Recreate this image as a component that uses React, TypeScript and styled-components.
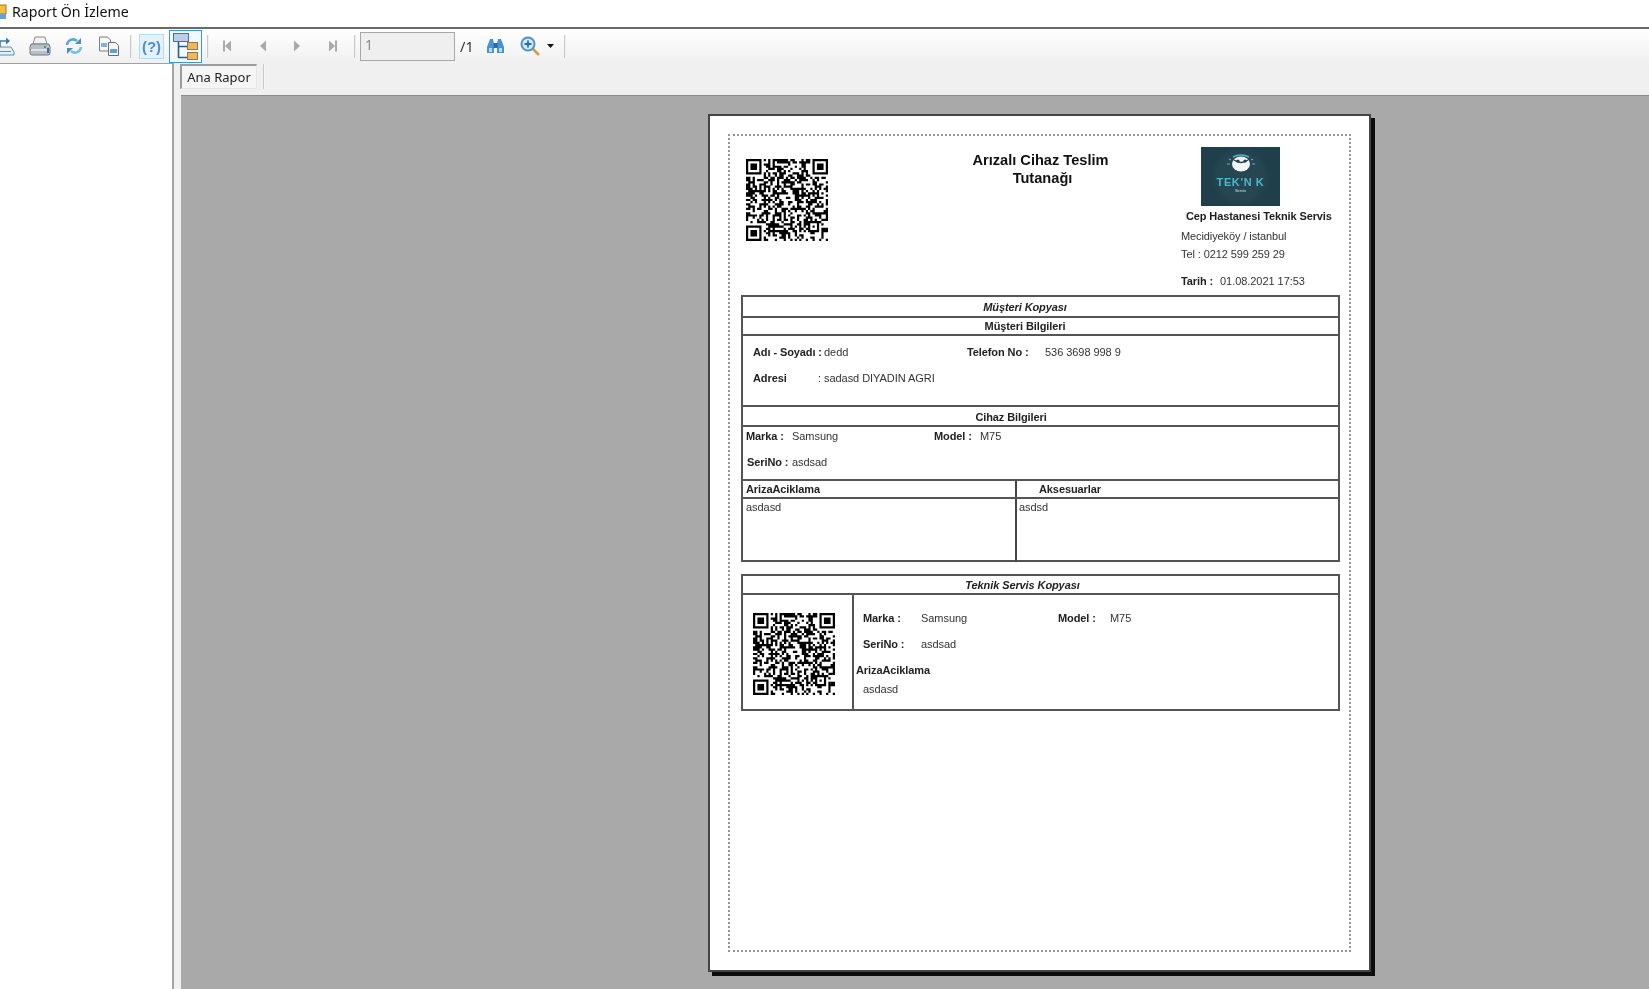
import React from "react";
import styled, { createGlobalStyle } from "styled-components";

const Global = createGlobalStyle`
  html, body { margin: 0; padding: 0; height: 100%; background: #a9a9a9; overflow: hidden; }
  #root { height: 100%; }
  * { box-sizing: border-box; }
`;

const Window = styled.div`
  width: 1649px; height: 100vh; min-height: 989px; display: flex; flex-direction: column;
  background: #f0f0f0; overflow: hidden; font-family: "Liberation Sans", Arial, sans-serif;
  filter: blur(0.35px);
`;
const TitleBar = styled.div`
  height: 29px; flex: none; background: #fff; border-bottom: 2px solid #6a6a6a;
  display: flex; align-items: center; padding-bottom: 4px; gap: 5px;
`;
const TitleText = styled.span`
  font-family: "Noto Sans", sans-serif; font-size: 14.2px; color: #111; white-space: nowrap;
`;
const Toolbar = styled.div`
  height: 34px; flex: none; display: flex; align-items: center;
  background: linear-gradient(#fff 0%, #f9f9f9 40%, #f0f0f0 100%);
`;
const ToolButton = styled.div<{ $w: number; $ml?: number }>`
  width: ${(p) => p.$w}px; margin-left: ${(p) => p.$ml ?? 0}px; height: 100%; flex: none;
  display: flex; align-items: center; justify-content: center;
`;
const ToolSep = styled.div<{ $ml: number }>`
  width: 2px; height: 23px; flex: none; margin-left: ${(p) => p.$ml}px; margin-top: 1px;
  background: #c9c9c9; border-right: 1px solid #efefef;
`;
const HelpButton = styled.div`
  width: 25px; height: 25px; flex: none; margin-left: 7px; margin-top: 1px;
  background: #e6f2fb; border: 1px solid #b5dcf7; color: #4a8fd0;
  font-size: 15px; font-weight: 700; display: flex; align-items: center; justify-content: center;
`;
const ToggledButton = styled.div`
  width: 33px; height: 33px; flex: none; margin-left: 5px;
  background: #f3f8fc; border: 1px solid #3d94e0;
  display: flex; align-items: center; justify-content: center;
`;
const PageBox = styled.div`
  width: 95px; height: 29px; flex: none; margin-left: 4px;
  background: #efefef; border: 1px solid #a8a8a8; color: #8a8a8a;
  font-family: "Noto Sans", sans-serif; font-size: 14px; padding-left: 4px; line-height: 23px;
`;
const PageTotal = styled.span`
  margin-left: 5px; width: 20px; flex: none; color: #333;
  font-family: "Noto Sans", sans-serif; font-size: 14.5px;
`;
const Body = styled.div`flex: 1; display: flex; min-height: 0;`;
const Sidebar = styled.div`
  width: 174px; flex: none; background: #fff;
  border-top: 1px solid #a0a0a0; border-right: 2px solid #a4a4a4;
`;
const Content = styled.div`flex: 1; display: flex; flex-direction: column; min-width: 0;`;
const TabStrip = styled.div`
  height: 32px; flex: none; display: flex; align-items: flex-start; padding: 1px 0 0 6px;
`;
const Tab = styled.div`
  width: 77px; height: 25px; flex: none; background: #f5f5f5;
  border-top: 2px solid #9c9c9c; border-left: 2px solid #9c9c9c;
  border-right: 1px solid #e6e6e6; border-bottom: 1px solid #e6e6e6;
  font-family: "Noto Sans", sans-serif; font-size: 13px; color: #222;
  display: flex; align-items: center; justify-content: center;
`;
const TabSep = styled.div`
  width: 2px; height: 25px; margin-left: 6px; background: #c9c9c9; border-right: 1px solid #f5f5f5;
`;
const Viewer = styled.div`
  flex: 1; margin-left: 7px; background: #a9a9a9; border-top: 1px solid #8c8c8c;
  padding: 18px 0 0 527px; overflow: hidden;
`;
const Paper = styled.div`
  width: 663px; height: 858px; background: #fff; border: 2px solid #444;
  box-shadow: 4px 4px 0 #0c0c0c; padding: 18px;
`;
const Sheet = styled.div`
  width: 623px; height: 818px; border: 2px dotted #949494;
  padding: 0 9px 0 11px; color: #1c1c1c; font-size: 11px; line-height: 14px;
`;
const Header = styled.div`height: 159px; display: flex;`;
const QrSlot = styled.div`
  flex: none; margin: 23px 0 0 5px; width: 82px; height: 82px;
`;
const TitleBlock = styled.div`
  width: 353px; flex: none; padding: 15px 0 0 72px; text-align: center;
  font-weight: 700; font-size: 14.6px; line-height: 18px; color: #111;
`;
const TitleSecond = styled.div`padding-left: 4px;`;
const Company = styled.div`flex: none; width: 158px; padding-top: 11px;`;
const Logo = styled.div`
  width: 79px; height: 59px; margin-left: 20px;
  background: radial-gradient(circle at 50% 50%, #264751 0 45%, #1f3f4a 60%);
  display: flex; flex-direction: column; align-items: center; justify-content: flex-start;
  padding-top: 5px;
`;
const LogoText = styled.div`
  font-size: 11px; font-weight: 700; line-height: 12px; letter-spacing: .6px; color: #4fb4cc;
  white-space: pre;
`;
const LogoSub = styled.div`font-size: 4px; line-height: 5px; color: #cfe0e4;`;
const CompanyName = styled.div`
  margin: 3px 0 0 5px; font-weight: 700; white-space: nowrap; letter-spacing: -.12px;
`;
const CompanyLine = styled.div<{ $mt: number }>`
  margin-top: ${(p) => p.$mt}px; white-space: nowrap; color: #333; letter-spacing: -.1px;
`;
const DateRow = styled.div`
  margin-top: 13px; display: grid; grid-template-columns: 39px auto; white-space: nowrap;
`;
const Table = styled.div<{ $mt?: number }>`
  width: 599px; border: 2px solid #555; margin-top: ${(p) => p.$mt ?? 0}px;
`;
const Row = styled.div<{ $h: number; $last?: boolean }>`
  height: ${(p) => p.$h}px; ${(p) => (p.$last ? "" : "border-bottom: 2px solid #555;")}
`;
const Heading = styled(Row)<{ $shift: number; $italic?: boolean; $drop?: number }>`
  display: flex; align-items: center; justify-content: center;
  padding: ${(p) => p.$drop ?? 0}px ${(p) => p.$shift}px 0 0; font-weight: 700;
  font-style: ${(p) => (p.$italic ? "italic" : "normal")}; letter-spacing: -.1px; color: #222;
`;
const Section = styled(Row)<{ $pl: number; $pt: number }>`
  padding: ${(p) => p.$pt}px 0 0 ${(p) => p.$pl}px;
`;
const Fields = styled.div<{ $cols: string; $mt?: number; $ml?: number }>`
  display: grid; grid-template-columns: ${(p) => p.$cols};
  margin-top: ${(p) => p.$mt ?? 0}px; margin-left: ${(p) => p.$ml ?? 0}px; white-space: nowrap;
`;
const Label = styled.span`font-weight: 700; color: #222; letter-spacing: -.1px;`;
const Value = styled.span`color: #333; letter-spacing: -.05px;`;
const SplitRow = styled(Row)`display: grid; grid-template-columns: 272px 1fr;`;
const LeftCell = styled.div`padding: 1px 0 0 3px;`;
const RightCell = styled.div<{ $pl: number; $over?: boolean }>`
  border-left: 2px solid #444; padding: 1px 0 0 ${(p) => p.$pl}px;
  ${(p) => (p.$over ? "height: 63px;" : "")}
`;
const ServiceBody = styled.div`height: 114px; display: grid; grid-template-columns: 111px 1fr;`;
const ServiceQr = styled.div`border-right: 2px solid #555; padding: 18px 0 0 10px;`;
const ServiceInfo = styled.div`padding: 16px 0 0 9px;`;

function makeQr(seed: number) {
  const n = 37;
  const grid: boolean[][] = [];
  let s = seed;
  const rnd = () => {
    s = (s * 1664525 + 1013904223) % 4294967296;
    return ((s >>> 16) & 255) / 255;
  };
  for (let y = 0; y < n; y++) {
    grid.push([]);
    for (let x = 0; x < n; x++) grid[y].push(rnd() > 0.5);
  }
  const finder = (ox: number, oy: number) => {
    for (let y = -1; y < 8; y++)
      for (let x = -1; x < 8; x++) {
        const px = ox + x, py = oy + y;
        if (px < 0 || py < 0 || px >= n || py >= n) continue;
        const ring = x >= 0 && x <= 6 && y >= 0 && y <= 6 && (x === 0 || x === 6 || y === 0 || y === 6);
        const core = x >= 2 && x <= 4 && y >= 2 && y <= 4;
        grid[py][px] = ring || core;
      }
  };
  finder(0, 0); finder(n - 7, 0); finder(0, n - 7);
  for (let y = -2; y <= 2; y++)
    for (let x = -2; x <= 2; x++)
      grid[30 + y][30 + x] = Math.max(Math.abs(x), Math.abs(y)) !== 1;
  let d = "";
  grid.forEach((r, y) => r.forEach((v, x) => { if (v) d += `M${x} ${y}h1v1h-1z`; }));
  return d;
}
const QR_PATH = makeQr(20210801);
const Qr = () => (
  <svg width="82" height="82" viewBox="0 0 37 37" style={{ display: "block" }}>
    <path d={QR_PATH} fill="#000" />
  </svg>
);

const NavIcon = ({ dir, bar }: { dir: "l" | "r"; bar?: boolean }) => (
  <svg width="9" height="12" viewBox="0 0 9 12">
    {dir === "l" ? <path d="M8 0.5v11L2 6z" fill="#aaa" /> : <path d="M1 0.5v11L7 6z" fill="#aaa" />}
    {bar && <rect x={dir === "l" ? 0 : 7} y="0.5" width="2" height="11" fill="#aaa" />}
  </svg>
);
const ExportIcon = () => (
  <svg width="34" height="20" viewBox="0 0 34 20">
    <path d="M17 11V5h7" fill="none" stroke="#3f78ad" strokeWidth="1.6" />
    <path d="M23 1.5l4 3.5-4 3.5z" fill="#3f78ad" />
    <path d="M12 11h16l3 5v3H10v-3z" fill="#e6eff7" stroke="#5f90bd" />
    <path d="M13 15.5h15" stroke="#5f90bd" />
  </svg>
);
const PrintIcon = () => (
  <svg width="22" height="20" viewBox="0 0 22 20">
    <path d="M6 1h10l2 7H4z" fill="#f3f3f3" stroke="#8c8c8c" />
    <path d="M2 8h18l1 3v6a2 2 0 0 1-2 2H3a2 2 0 0 1-2-2v-6z" fill="#b9bfc6" stroke="#727b86" />
    <path d="M2 13h18v2H2z" fill="#dfe3e8" />
    <rect x="15" y="10" width="2" height="2" fill="#3ba655" />
    <rect x="18" y="12" width="2" height="5" fill="#3b6ea8" />
  </svg>
);
const RefreshIcon = () => (
  <svg width="18" height="18" viewBox="0 0 18 18" fill="none">
    <path d="M2 8a6 6 0 0 1 10-4" stroke="#59a9d6" strokeWidth="2.6" />
    <path d="M16 1v6h-6z" fill="#4a8fc0" />
    <path d="M16 10a6 6 0 0 1-10 4" stroke="#7cc0e0" strokeWidth="2.6" />
    <path d="M2 17v-6h6z" fill="#4a8fc0" />
  </svg>
);
const CopyIcon = () => (
  <svg width="22" height="21" viewBox="0 0 22 21">
    <path d="M1.5 1h8l3 3v11h-11z" fill="#f7f7f7" stroke="#7c7c7c" />
    <path d="M3 7h6v4H3z" fill="#7fb2dc" />
    <path d="M10.5 6.5h7l3 3v10h-10z" fill="#f7f7f7" stroke="#6c6c6c" />
    <path d="M12 13h7v4h-7z" fill="#5f9fd4" />
  </svg>
);
const TreeIcon = () => (
  <svg width="25" height="27" viewBox="0 0 25 27">
    <rect x="0.5" y="0.5" width="15" height="8" fill="#b9cfe8" stroke="#4c6f9c" />
    <path d="M5.5 9v16M5.5 13.5h9M5.5 24.5h9" fill="none" stroke="#2f5c8f" strokeWidth="1.6" />
    <rect x="14.5" y="9.5" width="10" height="7" fill="#f2b654" stroke="#8a7a5a" />
    <rect x="14.5" y="19.5" width="10" height="7" fill="#f2b654" stroke="#8a7a5a" />
  </svg>
);
const BinocularsIcon = () => (
  <svg width="19" height="16" viewBox="0 0 19 16">
    <path d="M4 1h3l1 5v9H1V9z" fill="#4a92d0" />
    <path d="M12 1h3l3 8v6h-7V6z" fill="#4a92d0" />
    <rect x="7.5" y="5" width="4" height="5" fill="#2a6aa5" />
    <path d="M3 10h3v4H3zM13 10h3v4h-3z" fill="#b8dcf3" />
  </svg>
);
const ZoomIcon = () => (
  <svg width="21" height="20" viewBox="0 0 21 20">
    <path d="M12 12l7 7" stroke="#d99a4a" strokeWidth="2.6" />
    <circle cx="8" cy="8" r="6.5" fill="#d4e9f8" stroke="#4a92cf" strokeWidth="2" />
    <path d="M4.5 8h7M8 4.5v7" stroke="#2a6aa5" strokeWidth="1.8" />
  </svg>
);
const ArrowIcon = () => (
  <svg width="7" height="4" viewBox="0 0 7 4"><path d="M0 0h7L3.5 4z" fill="#111" /></svg>
);
const WindowIcon = () => (
  <svg width="7" height="16" viewBox="0 0 7 16">
    <rect x="-4" y="1" width="10" height="9" fill="#f0c040" stroke="#a07820" />
    <rect x="-4" y="10" width="10" height="5" fill="#6a9fd4" />
  </svg>
);
const LogoMark = () => (
  <svg width="34" height="24" viewBox="0 0 34 24">
    <path d="M9 5q8-4 16 0" fill="none" stroke="#4fb4cc" strokeWidth="1.4" />
    <ellipse cx="17" cy="12" rx="9" ry="7.5" fill="#f1f5f5" />
    <path d="M10 8q7 5 14 0" fill="none" stroke="#1f3f4a" strokeWidth="1.4" />
    <circle cx="14" cy="9" r="1.6" fill="#1f3f4a" /><circle cx="21" cy="9" r="1.6" fill="#1f3f4a" />
    <path d="M3 12h3M28 12h3M5 7l2 1M29 7l-2 1" stroke="#4fb4cc" strokeWidth="1.2" />
  </svg>
);

export default function App() {
  return (
    <Window>
      <Global />
      <TitleBar>
        <WindowIcon />
        <TitleText>Raport Ön İzleme</TitleText>
      </TitleBar>
      <Toolbar>
        <ToolButton $w={34} $ml={-17}><ExportIcon /></ToolButton>
        <ToolButton $w={34} $ml={6}><PrintIcon /></ToolButton>
        <ToolButton $w={34}><RefreshIcon /></ToolButton>
        <ToolButton $w={34} $ml={1}><CopyIcon /></ToolButton>
        <ToolSep $ml={4} />
        <HelpButton>(?)</HelpButton>
        <ToggledButton><TreeIcon /></ToggledButton>
        <ToolSep $ml={5} />
        <ToolButton $w={35} $ml={1}><NavIcon dir="l" bar /></ToolButton>
        <ToolButton $w={35}><NavIcon dir="l" /></ToolButton>
        <ToolButton $w={35}><NavIcon dir="r" /></ToolButton>
        <ToolButton $w={35}><NavIcon dir="r" bar /></ToolButton>
        <ToolSep $ml={4} />
        <PageBox>1</PageBox>
        <PageTotal>/1</PageTotal>
        <ToolButton $w={19} $ml={6}><BinocularsIcon /></ToolButton>
        <ToolButton $w={21} $ml={15}><ZoomIcon /></ToolButton>
        <ToolButton $w={7} $ml={6}><ArrowIcon /></ToolButton>
        <ToolSep $ml={10} />
      </Toolbar>
      <Body>
        <Sidebar />
        <Content>
          <TabStrip>
            <Tab>Ana Rapor</Tab>
            <TabSep />
          </TabStrip>
          <Viewer>
            <Paper>
              <Sheet>
                <Header>
                  <QrSlot><Qr /></QrSlot>
                  <TitleBlock>Arızalı Cihaz Teslim<TitleSecond>Tutanağı</TitleSecond></TitleBlock>
                  <Company>
                    <Logo>
                      <LogoMark />
                      <LogoText>{"TEK'N K"}</LogoText>
                      <LogoSub>Servis</LogoSub>
                    </Logo>
                    <CompanyName>Cep Hastanesi Teknik Servis</CompanyName>
                    <CompanyLine $mt={6}>Mecidiyeköy / istanbul</CompanyLine>
                    <CompanyLine $mt={4}>Tel : 0212 599 259 29</CompanyLine>
                    <DateRow><Label>Tarih :</Label><Value>01.08.2021 17:53</Value></DateRow>
                  </Company>
                </Header>
                <Table>
                  <Heading $h={21} $shift={31} $italic>Müşteri Kopyası</Heading>
                  <Heading $h={18} $shift={31}>Müşteri Bilgileri</Heading>
                  <Section $h={71} $pl={10} $pt={9}>
                    <Fields $cols="71px 143px 78px 1fr">
                      <Label>Adı - Soyadı :</Label><Value>dedd</Value>
                      <Label>Telefon No :</Label><Value>536 3698 998 9</Value>
                    </Fields>
                    <Fields $cols="65px 1fr" $mt={12}>
                      <Label>Adresi</Label><Value>: sadasd DIYADIN AGRI</Value>
                    </Fields>
                  </Section>
                  <Heading $h={20} $shift={59} $drop={2}>Cihaz Bilgileri</Heading>
                  <Section $h={54} $pl={3} $pt={2}>
                    <Fields $cols="46px 142px 46px 1fr">
                      <Label>Marka :</Label><Value>Samsung</Value>
                      <Label>Model :</Label><Value>M75</Value>
                    </Fields>
                    <Fields $cols="45px 1fr" $mt={12} $ml={1}>
                      <Label>SeriNo :</Label><Value>asdsad</Value>
                    </Fields>
                  </Section>
                  <SplitRow $h={18}>
                    <LeftCell><Label>ArizaAciklama</Label></LeftCell>
                    <RightCell $pl={22}><Label>Aksesuarlar</Label></RightCell>
                  </SplitRow>
                  <SplitRow $h={61} $last>
                    <LeftCell><Value>asdasd</Value></LeftCell>
                    <RightCell $pl={2} $over><Value>asdsd</Value></RightCell>
                  </SplitRow>
                </Table>
                <Table $mt={12}>
                  <Heading $h={19} $shift={36} $italic>Teknik Servis Kopyası</Heading>
                  <ServiceBody>
                    <ServiceQr><Qr /></ServiceQr>
                    <ServiceInfo>
                      <Fields $cols="58px 137px 52px 1fr">
                        <Label>Marka :</Label><Value>Samsung</Value>
                        <Label>Model :</Label><Value>M75</Value>
                      </Fields>
                      <Fields $cols="58px 1fr" $mt={12}>
                        <Label>SeriNo :</Label><Value>asdsad</Value>
                      </Fields>
                      <Fields $cols="1fr" $mt={12} $ml={-7}>
                        <Label>ArizaAciklama</Label>
                      </Fields>
                      <Fields $cols="1fr" $mt={5}>
                        <Value>asdasd</Value>
                      </Fields>
                    </ServiceInfo>
                  </ServiceBody>
                </Table>
              </Sheet>
            </Paper>
          </Viewer>
        </Content>
      </Body>
    </Window>
  );
}
